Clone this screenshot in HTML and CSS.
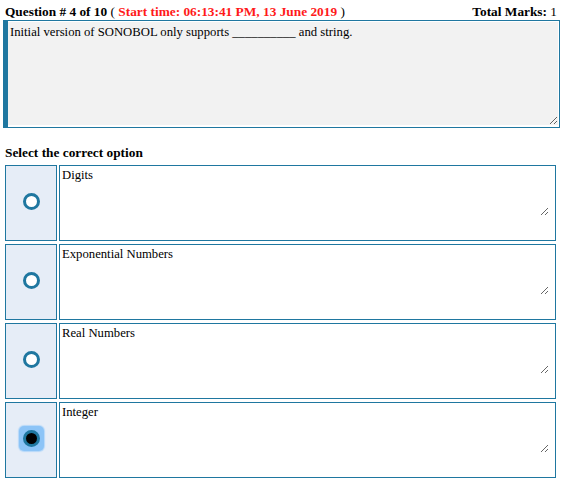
FILE: index.html
```html
<!DOCTYPE html>
<html lang="en">
  <head>
    <meta charset="UTF-8" />
    <title>Quiz</title>
    <link rel="stylesheet" href="styles.css">
  </head>
  <body>
    <div class="quiz">
      <div class="q-header">
        <div>
          <b>Question # 4 of 10</b> (
          <b class="start-time">Start time: 06:13:41 PM, 13 June 2019</b> )
        </div>
        <div><b>Total Marks:</b> 1</div>
      </div>
      <div class="question-box">
        <textarea class="question-text" readonly>Initial version of SONOBOL only supports __________ and string.</textarea>
      </div>
      <h3 class="select-title">Select the correct option</h3>
      <div class="options">
        <div class="option">
          <div class="radio-cell"><input type="radio" name="ans" value="1"></div>
          <div class="text-cell"><textarea readonly>Digits</textarea></div>
        </div>
        <div class="option">
          <div class="radio-cell"><input type="radio" name="ans" value="2"></div>
          <div class="text-cell"><textarea readonly>Exponential Numbers</textarea></div>
        </div>
        <div class="option">
          <div class="radio-cell"><input type="radio" name="ans" value="3"></div>
          <div class="text-cell"><textarea readonly>Real Numbers</textarea></div>
        </div>
        <div class="option">
          <div class="radio-cell">
            <span class="focus-ring"><input type="radio" name="ans" value="4" checked></span>
          </div>
          <div class="text-cell"><textarea readonly>Integer</textarea></div>
        </div>
      </div>
    </div>
  </body>
</html>
```

FILE: styles.css
```css
body {
  margin: 0;
  font-family: "Liberation Serif", "Times New Roman", serif;
  color: #000;
  background: #fff;
}
textarea {
  font-family: "Liberation Serif", "Times New Roman", serif;
  font-size: 12.7px;
  resize: vertical;
}
.quiz {
  padding: 3px 5px 0 3px;
}
.q-header {
  display: flex;
  justify-content: space-between;
  font-size: 13.33px;
  padding: 0 3px 0 2px;
  line-height: 17px;
}
.start-time {
  color: #ff1a1a;
}
.question-box {
  border: 1px solid #1f77a0;
  border-left: 5px solid #1f77a0;
  padding: 1px 1px 2px 0;
  height: 108px;
  box-sizing: border-box;
  background: #fff;
  display: flex;
}
.question-text {
  flex: 1;
  border: none;
  background: #f2f2f2;
  padding: 3px 2px;
  margin: 0;
  outline: none;
}
.select-title {
  font-size: 13.33px;
  margin: 16px 0 4px 2px;
  line-height: 17px;
}
.options {
  display: flex;
  flex-direction: column;
  gap: 3px;
  padding-left: 2px;
  padding-right: 4px;
}
.option {
  display: flex;
  gap: 2px;
  height: 76px;
}
.radio-cell {
  width: 52px;
  box-sizing: border-box;
  border: 1px solid #1f77a0;
  background: #e6edf7;
  display: flex;
  align-items: center;
  justify-content: center;
  padding-bottom: 3px;
}
.text-cell {
  flex: 1;
  border: 1px solid #1f77a0;
  display: flex;
  align-items: flex-start;
}
.text-cell textarea {
  flex: 1;
  border: none;
  margin: 0 6px 0 0;
  padding: 2px 2px;
  height: 46px;
  outline: none;
}
input[type="radio"] {
  appearance: none;
  -webkit-appearance: none;
  width: 17px;
  height: 17px;
  margin: 0;
  border: 3.5px solid #1f77a0;
  border-radius: 50%;
  background: #fff;
  box-sizing: border-box;
}
input[type="radio"]:checked {
  background: #000;
  border-width: 3px;
}
.focus-ring {
  display: flex;
  padding: 4px;
  border-radius: 5px;
  background: #8cc4f7;
  box-shadow: 0 0 1px 1px #b5d8f9;
}
```
